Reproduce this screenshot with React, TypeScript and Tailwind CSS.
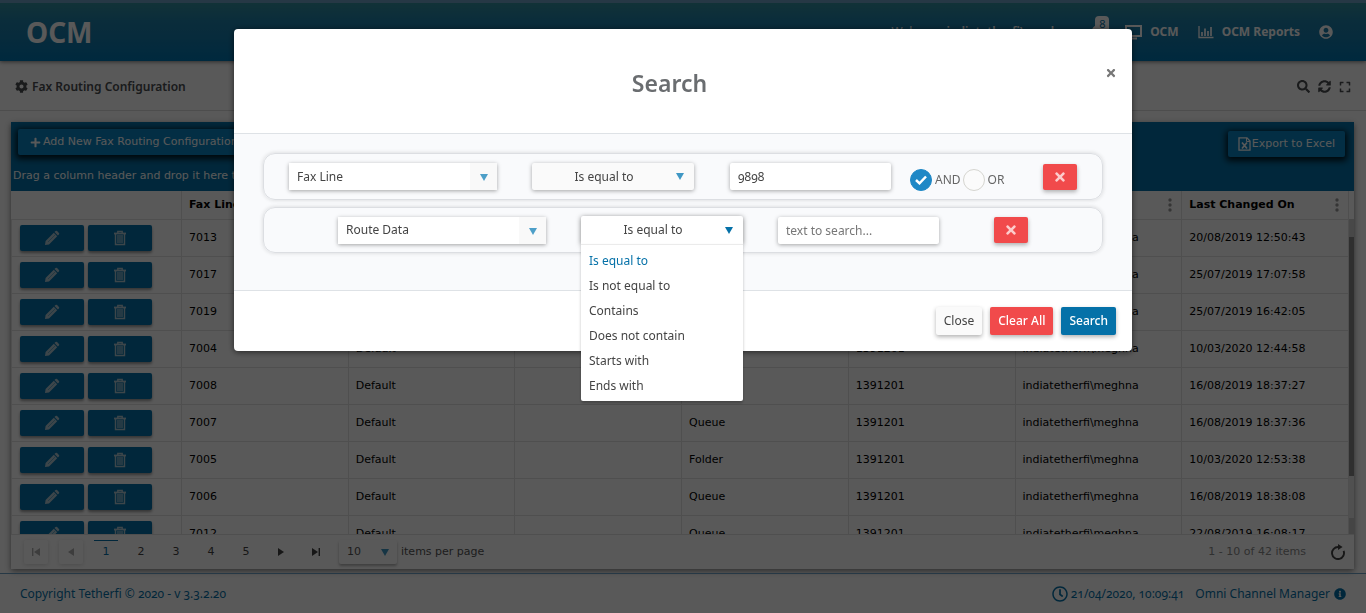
import { useState } from 'react';
import type { ReactNode } from 'react';
import {
  FaBell,
  FaCog,
  FaExpand,
  FaInfoCircle,
  FaPlus,
  FaRegClock,
  FaSearch,
  FaSyncAlt,
  FaTimes,
  FaUserCircle,
} from 'react-icons/fa';

const UI_FONT = "font-['Noto_Sans',sans-serif]";
const GRID_FONT = "font-['DejaVu_Sans',sans-serif]";

type Row = { line: string; route: string; target: string; number: string; user: string; changed: string };

const USER = 'indiatetherfi\\meghna';
const row = (line: string, target: string, changed: string): Row => ({
  line,
  route: 'Default',
  target,
  number: '1391201',
  user: USER,
  changed,
});

const ROWS: Row[] = [
  row('7013', 'Queue', '20/08/2019 12:50:43'),
  row('7017', 'Queue', '25/07/2019 17:07:58'),
  row('7019', 'Queue', '25/07/2019 16:42:05'),
  row('7004', '', '10/03/2020 12:44:58'),
  row('7008', 'Queue', '16/08/2019 18:37:27'),
  row('7007', 'Queue', '16/08/2019 18:37:36'),
  row('7005', 'Folder', '10/03/2020 12:53:38'),
  row('7006', 'Queue', '16/08/2019 18:38:08'),
  row('7012', 'Queue', '22/08/2019 16:08:17'),
];

const OPERATORS = ['Is equal to', 'Is not equal to', 'Contains', 'Does not contain', 'Starts with', 'Ends with'];

function Pencil() {
  return (
    <svg viewBox="0 0 16 16" className="size-4" fill="currentColor" aria-hidden="true">
      <path d="M1 15l.6-4L9.8 2.8l3.4 3.4L5 14.4zM10.5 2.1l1-1q.8-.8 1.6 0L14.9 2.9q.8.8 0 1.6l-1 1z" />
      <path d="M4 12l7-7" stroke="#0571a8" strokeWidth=".4" />
    </svg>
  );
}

function Trash() {
  return (
    <svg viewBox="0 0 16 16" className="size-4" fill="none" stroke="currentColor" aria-hidden="true">
      <path d="M2 3.5h12" strokeWidth="1.8" />
      <path d="M5.8 3V1.5h4.4V3M3.5 4v10.5h9V4" strokeWidth="1.4" />
      <path d="M6 5v8M8 5v8M10 5v8" strokeWidth="1.2" />
    </svg>
  );
}

function ExcelFile() {
  return (
    <svg viewBox="0 0 13 14" className="h-3.5 w-[13px]" fill="none" stroke="currentColor" aria-hidden="true">
      <path d="M1 .8h8L12 4v9.2H1z" strokeWidth="1.3" />
      <path d="M8.5 1v3.5H12" strokeWidth="1" />
      <path d="M4 5.5l5 6M9 5.5l-5 6" strokeWidth="1.7" />
    </svg>
  );
}

function Monitor() {
  return (
    <svg viewBox="0 0 17 16" className="h-4 w-[17px]" fill="none" stroke="currentColor" strokeWidth="2" aria-hidden="true">
      <path d="M1 2h15v10H1zM5 14.5h7" />
    </svg>
  );
}

function BarChart() {
  return (
    <svg viewBox="0 0 16 14" className="h-3.5 w-4" fill="none" stroke="currentColor" aria-hidden="true">
      <path d="M1 1v11.5h14.5" strokeWidth="1.3" />
      <path d="M4 11V7M7 11V3.5M10 11V6M13 11V2" strokeWidth="1.7" />
    </svg>
  );
}

function Caret({ className }: { className: string }) {
  return (
    <svg viewBox="0 0 8 7" className={`h-[7px] w-2 ${className}`} fill="currentColor" aria-hidden="true">
      <path d="M0 0h8L4 7z" />
    </svg>
  );
}

function Reload() {
  return (
    <svg viewBox="0 0 16 16" className="size-4" fill="none" stroke="currentColor" strokeWidth="1.9" aria-hidden="true">
      <path d="M9 3H8a6 6 0 1 0 5.6 3.8" />
      <path d="M8 0l4.6 3L8 6z" fill="currentColor" stroke="none" />
    </svg>
  );
}

function Dots() {
  return (
    <svg viewBox="0 0 4 14" className="h-3.5 w-1" fill="currentColor" aria-hidden="true">
      <circle cx="2" cy="2" r="1.7" />
      <circle cx="2" cy="7" r="1.7" />
      <circle cx="2" cy="12" r="1.7" />
    </svg>
  );
}

function Arrow({ bar, flip }: { bar?: boolean; flip?: boolean }) {
  return (
    <svg viewBox="0 0 8 8" className={flip ? 'size-2 rotate-180' : 'size-2'} fill="currentColor" aria-hidden="true">
      <path d={bar ? 'M0 0l6 4-6 4zM6.6 0H8v8H6.6z' : 'M1 0l6 4-6 4z'} />
    </svg>
  );
}

function Header() {
  return (
    <header className="flex h-[61px] shrink-0 items-center justify-between border-t-[3px] border-[#6da0c5] bg-gradient-to-b from-[#33909f] from-0% via-[#1f80a8] via-30% to-[#0075b1] pr-[33px] pl-[26px] text-white shadow-[0_1px_4px_rgba(0,0,0,0.5)]">
      <span className="text-[28px] leading-8 font-bold">OCM</span>
      <nav className="flex items-center text-xs font-bold">
        <span className="mr-4">
          <span className="font-normal">Welcome</span> <span className="font-semibold">{USER}</span>
        </span>
        <a href="#alerts" aria-label="Alerts" className="relative mr-5 flex">
          <FaBell className="size-4" />
          <span className="absolute -top-2 left-1.5 rounded-sm bg-white px-1 text-[11px] leading-4 font-normal text-[#0571a8]">8</span>
        </a>
        <a href="#ocm" className="mr-[19px] flex items-center gap-2">
          <Monitor />
          OCM
        </a>
        <a href="#reports" className="mr-[19px] flex items-center gap-2">
          <BarChart />
          OCM Reports
        </a>
        <a href="#account" aria-label="Account">
          <FaUserCircle className="size-3.5" />
        </a>
      </nav>
    </header>
  );
}

function TitleBar() {
  return (
    <div className="flex h-[50px] shrink-0 items-center justify-between border-b border-[#dcdcdc] px-[15px] pt-0.5 text-[#4a4d50]">
      <h1 className="flex items-center gap-1 text-xs font-semibold">
        <FaCog className="size-[13px]" />
        Fax Routing Configuration
      </h1>
      <div className="flex items-center gap-2">
        <button type="button" aria-label="Search">
          <FaSearch className="size-[13px]" />
        </button>
        <button type="button" aria-label="Refresh">
          <FaSyncAlt className="size-[13px]" />
        </button>
        <button type="button" aria-label="Full screen">
          <FaExpand className="size-3" />
        </button>
      </div>
    </div>
  );
}

function ActionButton({ label, children }: { label: string; children: ReactNode }) {
  return (
    <button
      type="button"
      aria-label={label}
      className="flex h-[26px] w-16 items-center justify-center rounded-xs bg-[#0571a8] text-[#b0c8d4] shadow-[0_2px_3px_rgba(0,0,0,0.4)]"
    >
      {children}
    </button>
  );
}

function HeadCell({ children }: { children?: ReactNode }) {
  return (
    <th className="h-[29px] border-r border-b border-[#e2e2e2] pr-[9px] pl-[7px] text-left">
      <span className="flex items-center justify-between">
        {children}
        <span className="ml-auto text-[#999999]">
          <Dots />
        </span>
      </span>
    </th>
  );
}

function Grid() {
  const cell = 'h-[37px] truncate border-r border-b border-[#e2e2e2] px-[7px]';
  return (
    <section className={`mx-3 mt-[11px] mb-1 -ml-px flex min-h-0 flex-1 flex-col pl-3 text-[11px] ${GRID_FONT}`}>
      <div className="flex min-h-0 flex-1 flex-col shadow-[0_2px_6px_rgba(0,0,0,0.5)]">
        <div className="h-[69px] shrink-0 bg-[#0571a8] px-[7px] pt-[7px] text-white">
          <div className="flex items-start justify-between">
            <button type="button" className="flex h-[26px] items-center gap-0.5 rounded-xs bg-[#0a85c4] px-3 shadow-[0_2px_6px_2px_rgba(0,0,0,0.8)]">
              <FaPlus className="size-[11px]" />
              Add New Fax Routing Configuration
            </button>
            <button type="button" className="mt-0.5 mr-0.5 flex h-[26px] items-center gap-px rounded-xs bg-[#0a85c4] px-2.5 shadow-[0_2px_6px_2px_rgba(0,0,0,0.8)]">
              <ExcelFile />
              Export to Excel
            </button>
          </div>
          <p className="-mx-[5px] pt-[11px] leading-4">Drag a column header and drop it here to group by that column</p>
        </div>
        <div className="flex min-h-0 flex-1 overflow-hidden">
          <div className="min-h-0 flex-1 overflow-hidden">
            <table className="w-full table-fixed border-separate border-spacing-0 text-black">
              <thead>
                <tr>
                  <th aria-label="Actions" className="w-[171px] border-r border-b border-[#e2e2e2]" />
                  <HeadCell>Fax Line</HeadCell>
                  <HeadCell />
                  <HeadCell />
                  <HeadCell />
                  <HeadCell />
                  <HeadCell />
                  <HeadCell>Last Changed On</HeadCell>
                </tr>
              </thead>
              <tbody>
                {ROWS.map((r) => (
                  <tr key={r.line}>
                    <td className="h-[37px] border-r border-b border-l border-[#e2e2e2] pl-2">
                      <span className="flex gap-1">
                        <ActionButton label={`Edit ${r.line}`}>
                          <Pencil />
                        </ActionButton>
                        <ActionButton label={`Delete ${r.line}`}>
                          <Trash />
                        </ActionButton>
                      </span>
                    </td>
                    <td className={cell}>{r.line}</td>
                    <td className={cell}>{r.route}</td>
                    <td className={cell} />
                    <td className={cell}>{r.target}</td>
                    <td className={cell}>{r.number}</td>
                    <td className={cell}>{r.user}</td>
                    <td className={cell}>{r.changed}</td>
                  </tr>
                ))}
              </tbody>
            </table>
          </div>
          <div className="flex w-[5px] shrink-0 flex-col pt-7" aria-hidden="true">
            <div className="h-[18px] bg-[#cfcfcf]" />
            <div className="h-[239px] bg-[#888888]" />
            <div className="h-[42px] bg-[#e6e6e6]" />
            <div className="flex-1 bg-[#c5c5c5]" />
          </div>
        </div>
        <Pager />
      </div>
    </section>
  );
}

function Pager() {
  const off = 'flex size-6 items-center justify-center rounded-xs text-[#b0b0b0] shadow-[0_1px_4px_rgba(0,0,0,0.15)]';
  const on = 'flex size-6 items-center justify-center text-[#444444]';
  return (
    <div className="flex h-[35px] shrink-0 items-center border-t border-[#e2e2e2] pr-2 pl-[13px] text-[#555555]">
      <div className="flex items-center gap-[11px]">
        <button type="button" disabled aria-label="First page" className={off}>
          <Arrow bar flip />
        </button>
        <button type="button" disabled aria-label="Previous page" className={off}>
          <Arrow flip />
        </button>
        <button type="button" aria-current="page" className="flex size-6 items-center justify-center border-t border-[#0571a8] text-[#0571a8]">
          1
        </button>
        {['2', '3', '4', '5'].map((n) => (
          <button type="button" key={n} className={on}>
            {n}
          </button>
        ))}
        <button type="button" aria-label="Next page" className={on}>
          <Arrow />
        </button>
        <button type="button" aria-label="Last page" className={on}>
          <Arrow bar />
        </button>
        <label className="flex items-center gap-1">
          <span className="relative flex items-center">
            <select className="h-6 w-[58px] appearance-none rounded-xs px-2 shadow-[0_2px_3px_rgba(0,0,0,0.3)]">
              <option>10</option>
            </select>
            <Caret className="pointer-events-none absolute right-2 text-[#3f97c4]" />
          </span>
          items per page
        </label>
      </div>
      <span className="mr-6 ml-auto text-[#8a8a8a]">1 - 10 of 42 items</span>
      <button type="button" aria-label="Reload" className="text-[#444444]">
        <Reload />
      </button>
    </div>
  );
}

function Footer() {
  return (
    <footer className="flex h-10 shrink-0 items-center justify-between border-t border-[#6da0c5] px-5 text-xs text-[#0571a8] oldstyle-nums">
      <span>Copyright Tetherfi © 2020 - v 3.3.2.20</span>
      <span className="flex items-center gap-[3px]">
        <FaRegClock className="size-4" />
        21/04/2020, 10:09:41
        <a href="#about" className="ml-2 flex items-center gap-1">
          Omni Channel Manager
          <FaInfoCircle className="size-3" />
        </a>
      </span>
    </footer>
  );
}

const FIELD_SHADOW = 'shadow-[0_1px_4px_rgba(0,0,0,0.35)]';

function FieldSelect({ label, value }: { label: string; value: string }) {
  return (
    <span className={`relative mr-[35px] flex h-[27px] w-52 items-center bg-white ${FIELD_SHADOW}`}>
      <select aria-label={label} className="h-full w-full appearance-none bg-transparent pr-8 pl-2 text-[#444444]">
        <option>{value}</option>
      </select>
      <span className="pointer-events-none absolute right-0 flex h-full w-[27px] items-center justify-center bg-[#f9f9f9] pt-0.5">
        <Caret className="text-[#4d9fc8]" />
      </span>
    </span>
  );
}

function RemoveButton({ label }: { label: string }) {
  return (
    <button
      type="button"
      aria-label={label}
      className="flex h-[26px] w-[34px] items-center justify-center rounded-xs bg-[#f14a4b] text-[#fccccc] shadow-[0_2px_4px_rgba(0,0,0,0.3)]"
    >
      <FaTimes className="size-3.5" />
    </button>
  );
}

function JoinOption({ value, checked, onSelect }: { value: string; checked: boolean; onSelect: () => void }) {
  return (
    <label className="flex items-center gap-[3px]">
      <span className="relative flex size-[22px] items-center justify-center">
        <input
          type="radio"
          name="join"
          value={value}
          checked={checked}
          onChange={onSelect}
          className="size-[22px] appearance-none rounded-full border border-[#d5d5d0] bg-[#fbfbfb] checked:border-[#1f88c6] checked:bg-[#1f88c6]"
        />
        {checked && (
          <svg viewBox="0 0 12 10" className="pointer-events-none absolute h-2.5 w-3" fill="none" stroke="white" strokeWidth="2.5" aria-hidden="true">
            <path d="M1 5l3.5 3.3L11 1.5" />
          </svg>
        )}
      </span>
      {value}
    </label>
  );
}

function SearchDialog() {
  const [join, setJoin] = useState('AND');
  const [operator, setOperator] = useState(OPERATORS[0]);
  const [open, setOpen] = useState(true);
  const [text, setText] = useState('9898');
  const box = 'flex items-center justify-center rounded-xl border border-[#dcdee2] shadow-[0_0_4px_rgba(0,0,0,0.15)]';
  const input = `h-[27px] w-[161px] rounded-xs bg-white px-2 text-[#444444] placeholder:text-[#777777] ${FIELD_SHADOW}`;
  return (
    <div role="dialog" aria-modal="true" aria-labelledby="search-title" className="w-full max-w-[898px] self-start rounded-sm bg-white text-xs text-[#444444] shadow-[0_1px_6px_rgba(0,0,0,0.6)]">
      <div className="flex h-[105px] items-start border-b border-[#dee2e6] pt-9 pr-[15px] pl-4">
        <h2 id="search-title" className="flex-1 pt-0.5 text-center text-[23px] leading-8 font-semibold text-[#6a6d70]">
          Search
        </h2>
        <button type="button" aria-label="Close dialog" className="flex w-7 justify-end pt-0.5 text-[#777777]">
          <FaTimes className="size-3" />
        </button>
      </div>
      <div className="border-b border-[#dee2e6] bg-[#f9fafc] px-[29px] pt-[19px] pb-[37px]">
        <div className={`h-[47px] ${box}`}>
          <FieldSelect label="First field" value="Fax Line" />
          <span className={`relative mr-9 flex h-[27px] w-[162px] items-center rounded-xs bg-[#fafafa] ${FIELD_SHADOW}`}>
            <select aria-label="First operator" className="h-full w-full appearance-none bg-transparent pr-[26px] pl-2 [text-align-last:center]">
              <option>Is equal to</option>
            </select>
            <Caret className="pointer-events-none absolute right-2.5 text-[#3f97c4]" />
          </span>
          <input aria-label="First value" className={`oldstyle-nums ${input}`} value={text} onChange={(e) => setText(e.target.value)} />
          <span className="ml-[19px] flex w-[133px] items-center gap-0.5 pt-1.5 text-[#666666]">
            <JoinOption value="AND" checked={join === 'AND'} onSelect={() => setJoin('AND')} />
            <JoinOption value="OR" checked={join === 'OR'} onSelect={() => setJoin('OR')} />
          </span>
          <RemoveButton label="Remove first condition" />
        </div>
        <div className={`mt-[7px] h-[46px] ${box}`}>
          <FieldSelect label="Second field" value="Route Data" />
          <div className="relative mr-[35px] w-[162px]">
            <button
              type="button"
              aria-haspopup="listbox"
              aria-expanded={open}
              onClick={() => setOpen(!open)}
              className="flex h-7 w-full items-center rounded-t-xs bg-white pr-2.5 pl-2 shadow-[0_1px_5px_rgba(0,0,0,0.5)]"
            >
              <span className="mr-2 flex-1 text-center">{operator}</span>
              <Caret className="text-[#0571a8]" />
            </button>
            {open && (
              <ul
                role="listbox"
                aria-label="Operators"
                className="absolute top-full left-0 z-10 w-full rounded-b-xs border-t border-[#ebebeb] bg-white py-[3px] leading-[25px] shadow-[0_2px_3px_rgba(0,0,0,0.25)]"
              >
                {OPERATORS.map((o) => (
                  <li
                    key={o}
                    role="option"
                    aria-selected={o === operator}
                    onClick={() => {
                      setOperator(o);
                      setOpen(false);
                    }}
                    className="cursor-pointer px-2 aria-selected:text-[#0571a8]"
                  >
                    {o}
                  </li>
                ))}
              </ul>
            )}
          </div>
          <input aria-label="Second value" placeholder="text to search..." className={`mr-[55px] ${input}`} />
          <RemoveButton label="Remove second condition" />
        </div>
      </div>
      <div className="flex justify-end gap-2 p-4 [&>button]:h-7 [&>button]:rounded-xs [&>button]:px-2 [&>button]:shadow-[0_2px_4px_rgba(0,0,0,0.3)]">
        <button type="button" className="bg-[#fafafa]">
          Close
        </button>
        <button type="button" className="bg-[#f14a4b] font-medium text-white">
          Clear All
        </button>
        <button type="button" className="bg-[#0571a8] font-medium text-white">
          Search
        </button>
      </div>
    </div>
  );
}

export default function App() {
  return (
    <div className={`flex h-screen min-h-[480px] flex-col bg-white ${UI_FONT}`}>
      <Header />
      <TitleBar />
      <Grid />
      <Footer />
      <div className="fixed inset-0 z-20 flex justify-center bg-black/65 pt-[29px]">
        <SearchDialog />
      </div>
    </div>
  );
}
